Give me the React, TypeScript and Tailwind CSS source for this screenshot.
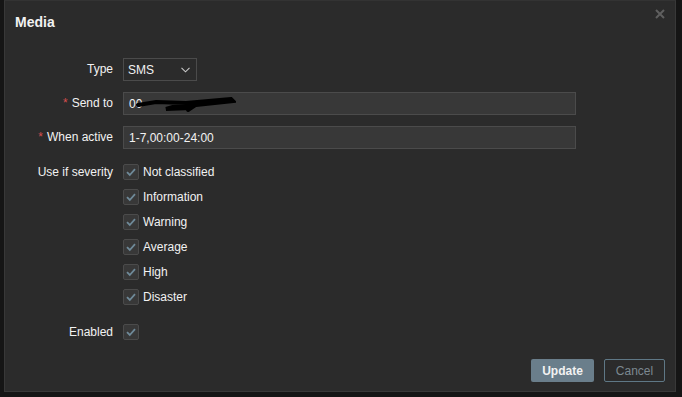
import React from "react";

const font = { fontFamily: '"Liberation Sans", Arial, sans-serif' };

function Check() {
  return (
    <div className="w-[16px] h-[16px] border border-[#4b4b4b] bg-[#383838] rounded-[2px] flex items-center justify-center shrink-0">
      <svg width="12" height="12" viewBox="0 0 12 12">
        <path d="M2 6.2 L4.8 9 L10 3.2" fill="none" stroke="#6f8a99" strokeWidth="1.8" />
      </svg>
    </div>
  );
}

function Row({ label, req, children, className = "" }: { label: string; req?: boolean; children: React.ReactNode; className?: string }) {
  return (
    <div className={"flex " + className}>
      <div className="w-[108px] shrink-0 text-right pr-0 text-[12px] text-[#f2f2f2] leading-[23px]">
        {req && <span className="text-[#d64e4e] mr-[4px]">*</span>}
        {label}
      </div>
      <div className="ml-[10px] flex-1">{children}</div>
    </div>
  );
}

export default function App() {
  const sev = ["Not classified", "Information", "Warning", "Average", "High", "Disaster"];
  return (
    <div className="w-[682px] h-[397px] bg-[#151515] pl-[4px]" style={font}>
      <div className="w-[672px] h-[392px] bg-[#2b2b2b] border border-[#383838] border-t-[#333333] flex flex-col relative">
        <div className="h-[41px] pl-[10px] flex items-center">
          <span className="text-[14px] font-bold text-[#f2f2f2] leading-none">Media</span>
        </div>
        <div className="absolute right-[8px] top-[6px] text-[#666666]">
          <svg width="14" height="14" viewBox="0 0 14 14">
            <path d="M3 3 L11 11 M11 3 L3 11" stroke="#5f5f5f" strokeWidth="2" />
          </svg>
        </div>
        <div className="flex flex-col pt-[16px]">
          <Row label="Type">
            <div className="w-[74px] h-[23px] border border-[#4b4b4b] bg-[#2b2b2b] flex items-center justify-between pl-[4px] pr-[6px] text-[12px] text-[#f2f2f2]">
              <span>SMS</span>
              <svg width="9" height="6" viewBox="0 0 9 6">
                <path d="M0.5 0.8 L4.5 4.8 L8.5 0.8" fill="none" stroke="#c8c8c8" strokeWidth="1.1" />
              </svg>
            </div>
          </Row>
          <Row label="Send to" req className="mt-[11px]">
            <div className="w-[453px] h-[23px] border border-[#4b4b4b] bg-[#383838] flex items-center pl-[5px] text-[12px] text-[#f2f2f2] relative">
              <span>00</span>
              <svg className="absolute left-[12px] top-[4px]" width="100" height="18" viewBox="0 0 100 18">
                <path d="M2 8 L20 5 L50 6 L95 2 L97 4 L60 8 L40 9 L30 12 L55 11 L52 13" fill="none" stroke="#000" strokeWidth="4" strokeLinecap="round" />
              </svg>
            </div>
          </Row>
          <Row label="When active" req className="mt-[11px]">
            <div className="w-[453px] h-[23px] border border-[#4b4b4b] bg-[#383838] flex items-center pl-[5px] text-[12px] text-[#f2f2f2]">
              1-7,00:00-24:00
            </div>
          </Row>
          <div className="flex mt-[15px]">
            <div className="w-[108px] shrink-0 text-right text-[12px] text-[#f2f2f2] leading-[16px]">Use if severity</div>
            <div className="ml-[10px] flex flex-col gap-[9px]">
              {sev.map((s) => (
                <div key={s} className="flex items-center gap-[4px] h-[16px]">
                  <Check />
                  <span className="text-[12px] text-[#f2f2f2]">{s}</span>
                </div>
              ))}
            </div>
          </div>
          <div className="flex mt-[19px]">
            <div className="w-[108px] shrink-0 text-right text-[12px] text-[#f2f2f2] leading-[16px]">Enabled</div>
            <div className="ml-[10px]">
              <Check />
            </div>
          </div>
        </div>
        <div className="mt-auto mb-[9px] flex justify-end gap-[10px] pr-[10px]">
          <div className="w-[63px] h-[23px] bg-[#6a7e8b] rounded-[2px] flex items-center justify-center text-[12px] font-bold text-[#f2f2f2]">
            Update
          </div>
          <div className="w-[61px] h-[23px] border border-[#5f7886] rounded-[2px] flex items-center justify-center text-[12px] text-[#7b8890]">
            Cancel
          </div>
        </div>
      </div>
    </div>
  );
}
